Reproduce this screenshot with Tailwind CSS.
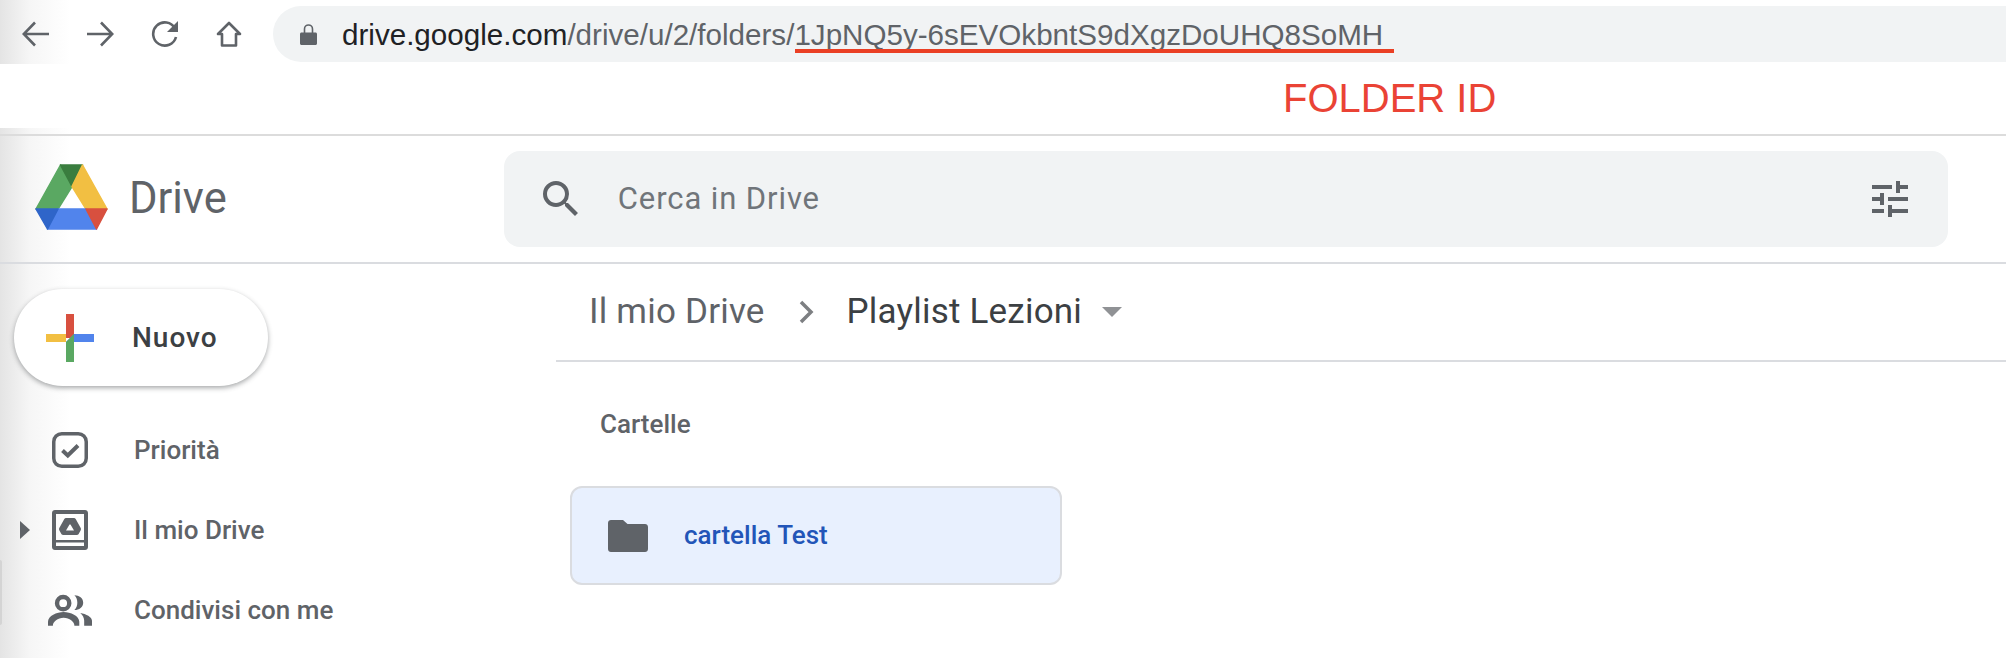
<!DOCTYPE html>
<html lang="it">
<head>
<meta charset="UTF-8" />
<title>Playlist Lezioni - Google Drive</title>
<script src="https://cdn.jsdelivr.net/npm/@tailwindcss/browser@4"></script>
</head>
<body class="bg-white w-[2006px] h-[658px] overflow-hidden font-['Roboto',sans-serif]">
	<!-- Browser toolbar -->
	<div class="flex items-center h-[64px] pl-[22px] pt-[4px] bg-[linear-gradient(90deg,#e4e4e4,#f6f6f6_30px,#ffffff_70px)]">
		<svg class="w-[28px] h-[26px] text-[#5f6368]" viewBox="0 0 28 26" fill="none" stroke="currentColor" stroke-width="2.6"><path d="M27 13H2M13 1.500 1.800 13 13 24.500" /></svg>
		<svg class="ml-[36px] w-[28px] h-[26px] text-[#5f6368]" viewBox="0 0 28 26" fill="none" stroke="currentColor" stroke-width="2.6"><path d="M1 13h25M15 1.500 26.200 13 15 24.500" /></svg>
		<svg class="ml-[37px] w-[28px] h-[26px] text-[#5f6368]" viewBox="0 0 28 26" fill="none"><path d="M24 7.500A11.600 11.600 0 1 0 25 16" stroke="currentColor" stroke-width="2.6" /><path d="M27 0v11H16z" fill="currentColor" /></svg>
		<svg class="ml-[37px] w-[26px] h-[26px] text-[#5f6368]" viewBox="0 0 26 26" fill="none" stroke="currentColor" stroke-width="2.6"><path d="M13 2 2 13h4v11.500h14V13h4z" stroke-linejoin="round" /></svg>
		<div class="flex items-center ml-[31px] flex-1 h-[56px] rounded-l-[28px] bg-[#f1f3f4] pl-[27px] font-['Liberation_Sans',sans-serif]">
			<svg class="w-[17px] h-[21px] text-[#5f6368]" viewBox="0 0 17 21" fill="currentColor"><path d="M1.500 8.500h14c.8 0 1.500.7 1.500 1.500v9.500c0 .8-.7 1.500-1.500 1.500h-14C.7 21 0 20.300 0 19.500V10c0-.8.7-1.500 1.500-1.500z" /><path d="M4.500 9V5a4 4 0 0 1 8 0v4" fill="none" stroke="currentColor" stroke-width="1.600" /></svg>
			<div class="ml-[25px] mt-[2px] text-[29.6px] leading-none whitespace-nowrap text-[#5f6368]"><span class="text-[#202124]">drive.google.com</span>/drive/u/2/folders/<span class="relative">1JpNQ5y-6sEVOkbntS9dXgzDoUHQ8SoMH<span class="absolute left-[1px] right-[-11px] top-[31px] h-[4px] bg-[#ea3f24]"></span></span></div>
		</div>
	</div>

	<!-- Annotation -->
	<div class="h-[64px] pl-[1283px] pt-[11px] text-[40px] leading-[46px] text-[#ea4335] font-['Liberation_Sans',sans-serif]">FOLDER ID</div>
	<div class="h-[6px] bg-[linear-gradient(90deg,#e4e4e4,#f6f6f6_30px,#ffffff_70px)]"></div>

	<!-- Drive header -->
	<header class="flex items-center h-[130px] pl-[35px] pr-[58px] border-y-2 border-t-[#dcdcdc] border-b-[#dadce0] bg-[linear-gradient(90deg,#e4e4e4,#f6f6f6_30px,#ffffff_70px)]">
		<svg class="w-[73px] h-[66px] -mt-[4px]" viewBox="35 164 73 66">
			<g stroke-width="1.500" stroke-linejoin="round">
				<path d="M60.500 165 72 186.500 58 209H36z" fill="#5aa862" stroke="#5aa862" />
				<path d="M60.500 165h22L72 186.500z" fill="#3a7d3f" stroke="#3a7d3f" />
				<path d="M82.500 165 107 209H86L72 186.500z" fill="#f2bf42" stroke="#f2bf42" />
				<path d="M58 209h28l10.500 20h-49z" fill="#5184ec" stroke="#5184ec" />
				<path d="M36 209h22l-10.500 20z" fill="#2f65c9" stroke="#2f65c9" />
				<path d="M86 209h21l-10.500 20z" fill="#d8503f" stroke="#d8503f" />
			</g>
		</svg>
		<span class="ml-[21px] text-[43.500px] leading-none text-[#5f6368]">Drive</span>
		<div class="flex items-center ml-[277px] flex-1 h-[96px] rounded-[16px] bg-[#f1f3f4] pl-[33px] pr-[34px]">
			<svg class="w-[48px] h-[48px] text-[#5f6368]" viewBox="0 0 24 24" fill="currentColor"><path d="M15.500 14h-.79l-.28-.27A6.470 6.470 0 0 0 16 9.500 6.500 6.500 0 1 0 9.500 16c1.610 0 3.090-.59 4.230-1.570l.27.28v.79l5 4.990L20.490 19l-4.990-5zm-6 0C7.010 14 5 11.990 5 9.500S7.010 5 9.500 5 14 7.010 14 9.500 11.990 14 9.500 14z" /></svg>
			<span class="ml-[33px] flex-1 text-[31px] tracking-[0.9px] text-[#70757a]">Cerca in Drive</span>
			<svg class="w-[48px] h-[48px] text-[#5f6368]" viewBox="0 0 24 24" fill="currentColor"><path d="M3 17v2h6v-2H3zM3 5v2h10V5H3zm10 16v-2h8v-2h-8v-2h-2v6h2zM7 9v2H3v2h4v2h2V9H7zm14 4v-2H11v2h10zm-6-4h2V7h4V5h-4V3h-2v6z" /></svg>
		</div>
	</header>

	<div class="relative flex h-[394px]">
		<!-- Sidebar -->
		<aside class="w-[556px] h-full bg-[linear-gradient(90deg,#e4e4e4,#f6f6f6_30px,#ffffff_70px)]">
			<button class="flex items-center mt-[25px] ml-[14px] w-[254px] h-[97px] rounded-full bg-white shadow-[0_2px_5px_rgba(60,64,67,0.45)]">
				<svg class="ml-[32px] w-[48px] h-[48px]" viewBox="0 0 48 48">
					<path d="M20 0h8v24h-8z" fill="#d8503f" />
					<path d="M0 20h20v8H0z" fill="#f2bf42" />
					<path d="M28 20h20v8H20z" fill="#5184ec" />
					<path d="M20 28l8-8v28h-8z" fill="#5aa862" />
				</svg>
				<span class="ml-[38px] text-[28px] tracking-[1px] font-medium text-[#3c4043]">Nuovo</span>
			</button>
			<nav class="mt-[24px]">
				<div class="flex items-center h-[80px] pl-[48px]">
					<span class="flex justify-center w-[44px]">
						<svg class="w-[36px] h-[36px] text-[#5f6368]" viewBox="0 0 36 36" fill="none" stroke="currentColor" stroke-width="3.500"><rect x="1.750" y="1.750" width="32.500" height="32.500" rx="8" /><path d="M10.500 18.500l5.300 5L26 13.500" stroke-width="4" /></svg>
					</span>
					<span class="ml-[42px] text-[26px] font-medium text-[#5f6368]">Priorità</span>
				</div>
				<div class="flex items-center h-[80px] pl-[20px]">
					<svg class="w-[10px] h-[18px] mr-[18px] text-[#5f6368]" viewBox="0 0 10 18" fill="currentColor"><path d="M0 0l10 9-10 9z" /></svg>
					<span class="flex justify-center w-[44px]">
						<svg class="w-[36px] h-[40px] text-[#5f6368]" viewBox="0 0 36 40" fill="currentColor"><path fill-rule="evenodd" d="M3 0h30c1.700 0 3 1.300 3 3v34c0 1.700-1.300 3-3 3H3c-1.700 0-3-1.300-3-3V3c0-1.700 1.300-3 3-3zm1 4v26h28V4H4zm0 28.500v3.500h28v-3.500H4z" /><path fill-rule="evenodd" d="M14 8h8c.7 0 1.300.4 1.700 1l5 9c.4.7.4 1.500 0 2.200l-2.200 4c-.4.5-1 .8-1.700.8H11.200c-.7 0-1.300-.3-1.700-.8l-2.200-4c-.4-.7-.4-1.500 0-2.200l5-9c.4-.6 1-1 1.700-1zm3.500 6.500-3.500 6h8l-3.500-6h-1z" /></svg>
					</span>
					<span class="ml-[42px] text-[26px] font-medium text-[#5f6368]">Il mio Drive</span>
				</div>
				<div class="flex items-center h-[80px] pl-[48px]">
					<span class="flex justify-center w-[44px]">
						<svg class="w-[45px] h-[32px] text-[#5f6368]" viewBox="0 0 45 32" fill="currentColor"><path fill-rule="evenodd" d="M15.500-2.500a8.500 8.500 0 1 1 0 17 8.500 8.500 0 0 1 0-17zm0 4.500a4 4 0 1 0 0 8 4 4 0 0 0 0-8z" transform="translate(0 3)" /><path d="M0 32v-4c0-6 9-10 16-10s16 4 16 10v4h-5c0-4-5-8-11-8S5 28 5 32H0z" /><path d="M27 1c5 0 9 3 9 7.500S32 16 27 16c2-2 3-4.500 3-7.500S29 3 27 1z" /><path d="M33 19c6 1 12 4 12 8v5h-8v-5c0-3-1.500-6-4-8z" /></svg>
					</span>
					<span class="ml-[42px] text-[26px] font-medium text-[#5f6368]">Condivisi con me</span>
				</div>
			</nav>
			<div class="absolute left-0 top-[296px] w-[2px] h-[65px] rounded-r bg-[#d4d4d4]"></div>
		</aside>

		<!-- Content -->
		<main class="flex-1">
			<div class="flex items-center h-[98px] pl-[33px] border-b-2 border-[#dadce0] text-[35px] tracking-[0.2px]">
				<span class="text-[#5f6368]">Il mio Drive</span>
				<svg class="ml-[34px] w-[15px] h-[24px] text-[#7d7f82]" viewBox="0 0 15 24" fill="none" stroke="currentColor" stroke-width="3.500"><path d="M2 2l10 10L2 22" /></svg>
				<span class="ml-[33px] text-[#3c4043]">Playlist Lezioni</span>
				<svg class="ml-[20px] w-[20px] h-[10px] text-[#909295]" viewBox="0 0 20 10" fill="currentColor"><path d="M0 0h20L10 10z" /></svg>
			</div>
			<h2 class="mt-[48px] ml-[44px] text-[26px] leading-[28px] font-medium text-[#5f6368]">Cartelle</h2>
			<div class="flex items-center mt-[48px] ml-[14px] w-[492px] h-[99px] rounded-[12px] border-2 border-[#dadce0] bg-[#e8f0fe] pl-[36px]">
				<svg class="w-[40px] h-[32px] text-[#5f6368]" viewBox="0 0 40 32" fill="currentColor"><path d="M3 0h12l4.500 4H37c1.700 0 3 1.300 3 3v22c0 1.700-1.300 3-3 3H3c-1.700 0-3-1.300-3-3V3c0-1.700 1.300-3 3-3z" /></svg>
				<span class="ml-[36px] text-[26px] font-medium text-[#2255b8]">cartella Test</span>
			</div>
		</main>
	</div>
</body>
</html>
